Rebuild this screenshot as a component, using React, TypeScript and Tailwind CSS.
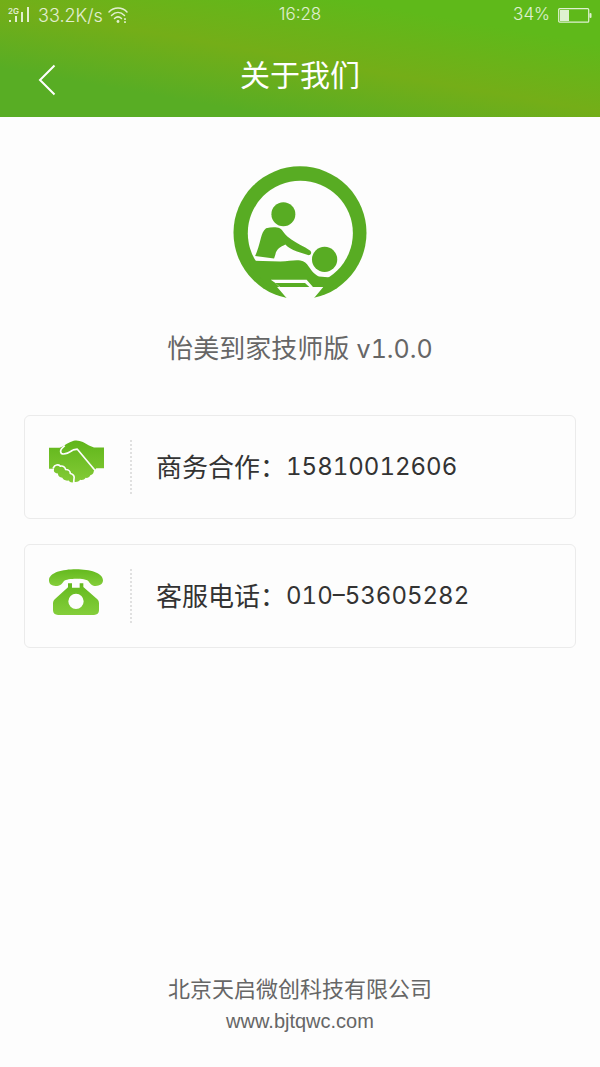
import type { ReactNode } from "react";

const SignalIcon = () => (
  <svg viewBox="0 0 22 18" className="h-[18px] w-[22px] overflow-visible" fill="currentColor" aria-hidden="true">
    <text x="0" y="8" fontSize="8" fontWeight="600">2G</text>
    <rect x="1" y="14" width="2" height="2" />
    <rect x="7" y="10" width="2" height="6" />
    <rect x="13" y="6" width="2" height="10" />
    <rect x="19" y="1" width="2" height="15" />
  </svg>
);

const WifiIcon = () => (
  <svg viewBox="0 0 22 18" className="h-[18px] w-[22px]" fill="none" stroke="currentColor" strokeWidth="1.5" strokeLinecap="round" aria-hidden="true">
    <path d="M2 6C7 .8 15 .8 20 6M4.500 9.500c4-4 9-4 13 0M7.500 12.500c2.200-2 4.800-2 7 0" />
    <circle cx="11" cy="15.500" r="1.400" fill="currentColor" stroke="none" />
    <path d="M18 13v.2M18 16v.2" strokeWidth="1.800" />
  </svg>
);

const BatteryIcon = () => (
  <svg viewBox="0 0 34 15" className="h-[15px] w-[34px]" aria-hidden="true">
    <rect x="0.700" y="0.700" width="30" height="13.500" rx="1" fill="none" stroke="currentColor" strokeWidth="1.200" />
    <rect x="2" y="2" width="9" height="11" fill="currentColor" />
    <rect x="31.500" y="5" width="2" height="5" rx="1" fill="currentColor" />
  </svg>
);

const Logo = () => (
  <svg viewBox="38 35 402 400" className="h-[133px] w-[134px]" fill="#58ac23" role="img" aria-label="怡美到家">
    <circle cx="239" cy="236" r="200" />
    <circle cx="240" cy="237" r="158" fill="#fdfdfd" />
    {/* lying body, joined to the ring */}
    <path d="M88 320L180 322C205 321 222 317 240 319C252 321 259 327 265 337C276 353 283 361 296 367L340 371L368 335L385 350L330 400H150L90 345Z" />
    <circle cx="313" cy="316" r="38" />
    {/* therapist */}
    <circle cx="189" cy="180" r="36" />
    <path d="M137 222C153 218 168 218 178 222C187 227 191 238 201 247C216 260 235 270 255 280L270 290C276 296 271 304 263 303L230 292C214 287 202 279 195 271C180 278 168 285 165 301L161 313L104 306C111 289 116 274 121 253C125 239 128 229 137 222Z" />
    {/* table */}
    <path d="M151 377H259L278 399H309L278 436H202L170 399H177L164 386Z" fill="#fdfdfd" />
    <path d="M164 387H254L267 399H179Z" />
  </svg>
);

const HandshakeIcon = () => (
  <svg viewBox="105 105 165 128" className="h-[43px] w-[55px]" role="img" aria-label="商务合作">
    <defs>
      <linearGradient id="shake" x1="0" y1="0" x2="0" y2="1">
        <stop offset="0" stopColor="#60b51b" />
        <stop offset="1" stopColor="#84cb36" />
      </linearGradient>
    </defs>
    <path d="M105 128H137C151 123 163 111 179 107C195 103 211 112 225 121L240 127H270V189H247L239 199C239 206 234 209 229 210C226 216 221 219 215 218C211 224 205 226 199 224C193 230 187 232 182 230C174 234 167 231 164 226C154 228 147 223 145 218C136 217 131 211 132 205C122 204 117 198 121 191H105Z" fill="url(#shake)" />
    <g fill="none" stroke="#fdfdfd" strokeWidth="5" strokeLinejoin="round" strokeLinecap="round">
      <path d="M151 123C143 129 137 138 142 145C154 151 167 141 178 134L190 132L244 197" />
      <path d="M118 188C122 178 133 177 139 183C148 181 154 187 155 193C164 193 169 199 169 205C177 206 182 213 180 220L179 233" />
    </g>
  </svg>
);

const TelephoneIcon = () => (
  <svg viewBox="105 100 162 138" className="h-[46px] w-[54px]" role="img" aria-label="客服电话">
    <defs>
      <linearGradient id="phone" x1="0" y1="0" x2="0" y2="1">
        <stop offset="0" stopColor="#64b91e" />
        <stop offset="1" stopColor="#84ce3b" />
      </linearGradient>
    </defs>
    <g fill="url(#phone)">
      <path d="M105 134C105 111 145 101 186 101C228 101 267 112 267 134C267 145 257 151 245 151C232 151 228 143 223 136C215 127 159 127 150 136C144 145 138 151 125 151C113 151 105 145 105 134Z" />
      <path fillRule="evenodd" d="M162 143H174V156H197V143H208V154L250 191C254 195 255 199 255 204V224C255 233 249 238 240 238H132C123 238 117 233 117 224V204C117 198 119 194 123 190L162 155ZM186 174A23 23 0 1 0 186 220A23 23 0 1 0 186 174Z" />
    </g>
  </svg>
);

type ContactCardProps = {
  icon: ReactNode;
  label: string;
  phone: string;
};

const ContactCard = ({ icon, label, phone }: ContactCardProps) => (
  <a
    href={`tel:${phone}`}
    className="flex h-[104px] items-center rounded-md border border-[#ebebeb] px-6 text-[26px] text-[#333]"
  >
    <span className="flex h-[54px] w-[81px] items-start">{icon}</span>
    <span className="h-[54px] border-l-2 border-dotted border-[#e0e0e0] pr-6" />
    <span>{label}：</span>
    <span className="text-[24px] tabular-nums">{phone}</span>
  </a>
);

export default function App() {
  return (
    <div className="flex min-h-screen flex-col bg-[#fdfdfd] font-['Inter','Noto_Sans_CJK_SC',sans-serif] text-[#666]">
      {/* Header */}
      <header className="bg-[linear-gradient(190deg,#5fb91a_20%,#74ae18_50%,#58ad24_78%)] text-white">
        <div className="grid h-[30px] grid-cols-3 items-center px-2 text-[17px] font-light text-white/80">
          <div className="flex items-center gap-2">
            <SignalIcon />
            <div className="flex items-center gap-1">
              <span className="text-[18px]">33.2K/s</span>
              <WifiIcon />
            </div>
          </div>
          <span className="text-center">16:28</span>
          <div className="flex items-center justify-end gap-2">
            <span>34%</span>
            <BatteryIcon />
          </div>
        </div>
        <div className="grid h-[87px] grid-cols-[60px_1fr_60px] items-center">
          <button type="button" aria-label="返回" className="flex justify-end pt-3 pr-1">
            <svg viewBox="0 0 18 32" className="h-8 w-[18px]" fill="none" stroke="currentColor" strokeWidth="2">
              <path d="M16.500 1.500L2 16L16.500 30.500" />
            </svg>
          </button>
          <h1 className="pt-1 text-center text-[30px]">关于我们</h1>
        </div>
      </header>

      {/* Logo and version */}
      <main className="flex flex-1 flex-col px-6 pt-[49px]">
        <div className="flex flex-col items-center gap-8">
          <Logo />
          <p className="text-[26px] leading-9">
            怡美到家技师版 <span className="text-[25px] tabular-nums">v1.0.0</span>
          </p>
        </div>

        <div className="mt-12 flex flex-col gap-[25px]">
          <ContactCard icon={<HandshakeIcon />} label="商务合作" phone="15810012606" />
          <ContactCard icon={<TelephoneIcon />} label="客服电话" phone="010–53605282" />
        </div>
      </main>

      <footer className="flex flex-col items-center pb-8">
        <p className="text-[22px] leading-9">北京天启微创科技有限公司</p>
        <a href="http://www.bjtqwc.com" className="font-['Liberation_Sans',sans-serif] text-[20px] leading-7">
          www.bjtqwc.com
        </a>
      </footer>
    </div>
  );
}
